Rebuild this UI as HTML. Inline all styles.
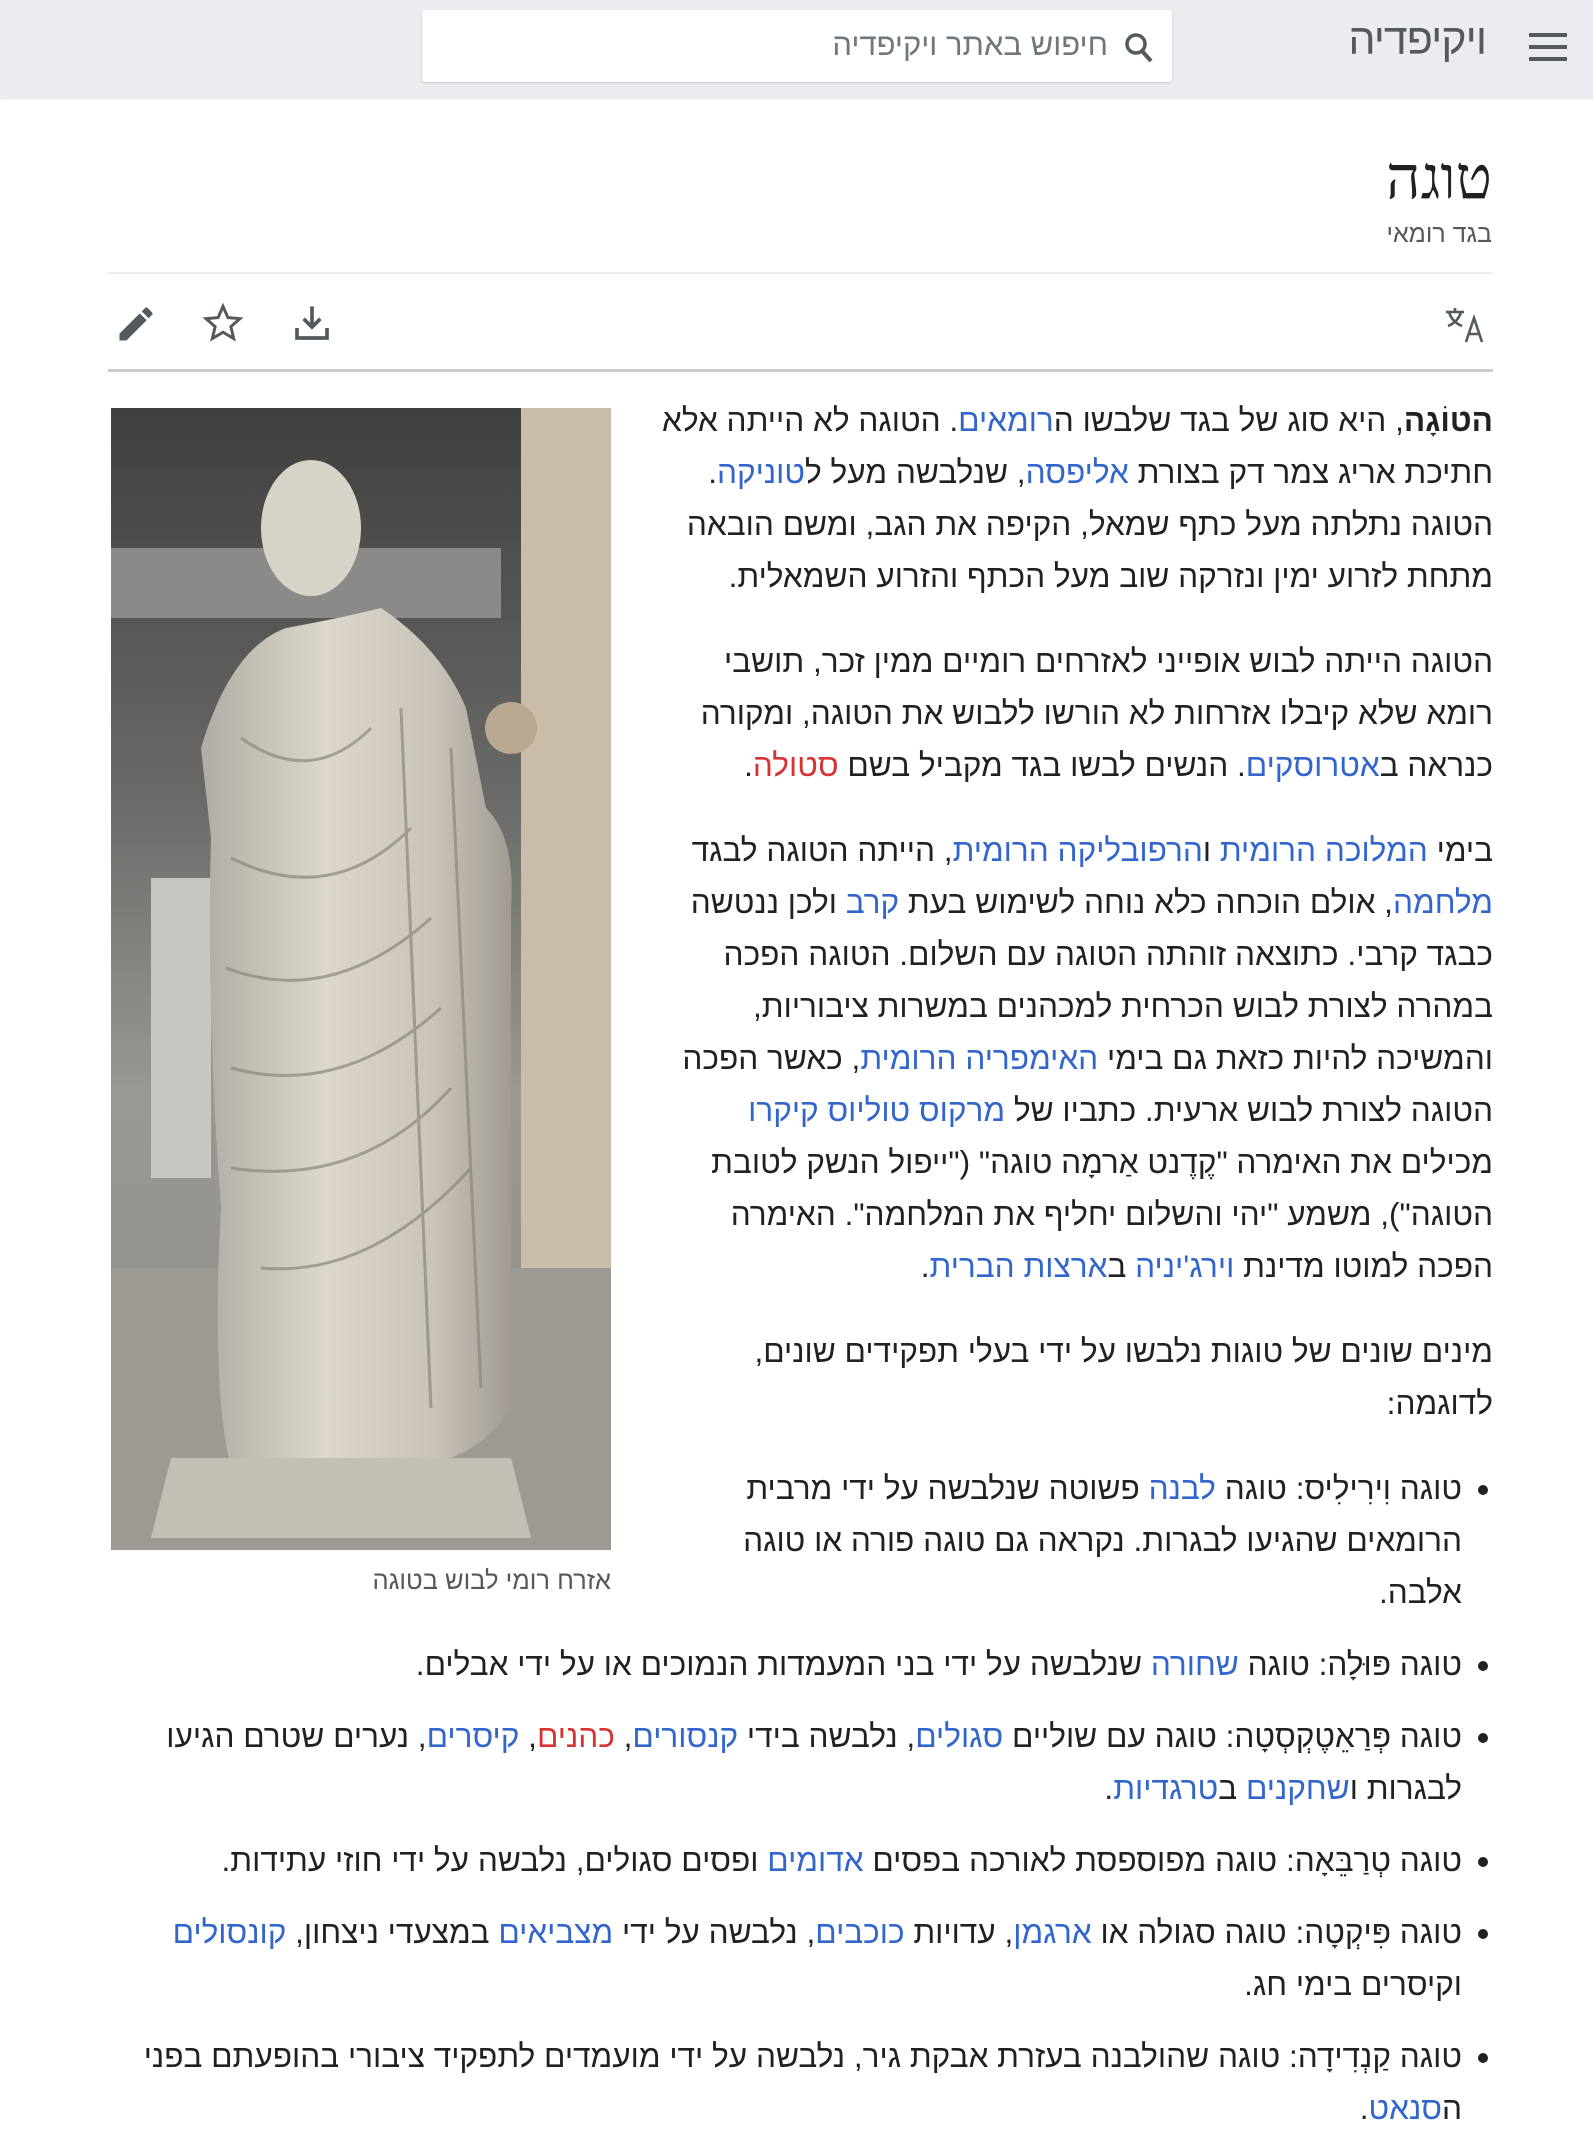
<!DOCTYPE html>
<html lang="he" dir="rtl"><head><meta charset="utf-8">
<style>
html,body{margin:0;padding:0;background:#fff;}
body{width:1593px;height:2137px;overflow:hidden;position:relative;font-family:"Liberation Sans","DejaVu Sans",sans-serif;color:#202122;}
.hdr{position:absolute;left:0;top:0;width:1593px;height:98px;background:#eaecf0;box-shadow:0 1px 2px rgba(0,0,0,.12);}
.ham{position:absolute;left:1529px;width:38px;height:4px;background:#54595d;}
.logo{position:absolute;right:107px;top:16px;font-size:43px;color:#54595d;letter-spacing:-1px;}
.search{position:absolute;left:422px;top:10px;width:750px;height:72px;background:#fff;border-radius:3px;box-shadow:0 1px 2px rgba(0,0,0,.15);}
.search span{position:absolute;right:64px;top:17px;font-size:31px;color:#72777d;}
h1{position:absolute;right:101px;top:143px;margin:0;font-weight:normal;font-size:60px;line-height:70px;font-family:"Liberation Serif","DejaVu Serif",serif;}
.sub{position:absolute;right:101px;top:220px;font-size:25px;color:#54595d;}
.l1{position:absolute;left:108px;width:1385px;top:272px;height:2px;background:#eaecf0;}
.l2{position:absolute;left:108px;width:1385px;top:369px;height:3px;background:#c8ccd1;}
.content{position:absolute;left:108px;top:394px;width:1385px;font-size:31.6px;line-height:52px;}
.fig{float:left;width:500px;margin:14px 50px 10px 3px;}
.fig svg{display:block;}
.cap{font-size:25.5px;color:#54595d;line-height:30px;margin-top:16px;text-align:right;}
p{margin:0 0 33px 0;}
a{color:#3366cc;text-decoration:none;}
a.new{color:#d73333;}
ul{margin:0;padding:0 31px 0 0;}
li{margin:0 0 20px 0;}
</style></head><body>
<div class="hdr">
  <div class="ham" style="top:33px"></div><div class="ham" style="top:45px"></div><div class="ham" style="top:57px"></div>
  <div class="logo">ויקיפדיה</div>
  <div class="search">
    <svg style="position:absolute;right:18px;top:22px" width="30" height="32" viewBox="0 0 30 32"><circle cx="12" cy="12" r="9" fill="none" stroke="#54595d" stroke-width="3.5"/><path d="M18 19 L27 29" stroke="#54595d" stroke-width="4"/></svg>
    <span>חיפוש באתר ויקיפדיה</span>
  </div>
</div>
<h1>טוגה</h1>
<div class="sub">בגד רומאי</div>
<div class="l1"></div>
<svg style="position:absolute;left:1444px;top:306px" width="42" height="38" viewBox="0 0 42 38" fill="none" stroke="#54595d" stroke-width="2.6"><path d="M2 6h18M11 2v4M5 6q3 10 13 14M17 6q-3 10-13 14"/><path d="M22 36l8-24 8 24M25 28h10"/></svg>
<svg style="position:absolute;left:114px;top:302px" width="44" height="44" viewBox="0 0 24 24"><path d="M3 17.25V21h3.75L17.81 9.94l-3.75-3.75L3 17.25zM20.71 7.04a1 1 0 000-1.41l-2.34-2.34a1 1 0 00-1.41 0l-1.83 1.830 3.75 3.75 1.83-1.83z" fill="#54595d"/></svg>
<svg style="position:absolute;left:202px;top:302px" width="42" height="42" viewBox="0 0 24 24"><path d="M12 2.5l2.8 6.4 6.9.6-5.2 4.6 1.6 6.8L12 17.3l-6.1 3.6 1.6-6.8-5.2-4.6 6.9-.6z" fill="none" stroke="#54595d" stroke-width="1.7"/></svg>
<svg style="position:absolute;left:292px;top:302px" width="40" height="42" viewBox="0 0 24 24"><path d="M12 2v12M7 9.5l5 5 5-5" fill="none" stroke="#54595d" stroke-width="2.2"/><path d="M3 15v6h18v-6" fill="none" stroke="#54595d" stroke-width="2.2"/></svg>
<div class="l2"></div>
<div class="content">
<div class="fig">
<svg width="500" height="1142" viewBox="0 0 500 1142">
<defs>
<linearGradient id="bg" x1="0" y1="0" x2="0" y2="1"><stop offset="0" stop-color="#3e403e"/><stop offset=".35" stop-color="#6b6c69"/><stop offset=".6" stop-color="#9a9894"/><stop offset="1" stop-color="#8e8c88"/></linearGradient>
<linearGradient id="st" x1="0" y1="0" x2="1" y2="0"><stop offset="0" stop-color="#b0aca3"/><stop offset=".4" stop-color="#dcd7cc"/><stop offset=".75" stop-color="#c8c3b9"/><stop offset="1" stop-color="#a09b92"/></linearGradient>
</defs>
<rect width="500" height="1142" fill="url(#bg)"/>
<rect x="410" y="0" width="90" height="1142" fill="#c9bca8"/>
<rect x="0" y="140" width="390" height="70" fill="#8a8b88"/>
<rect x="40" y="470" width="60" height="300" fill="#c8c6c1"/>
<rect x="0" y="860" width="500" height="282" fill="#9d9a94"/>
<ellipse cx="200" cy="120" rx="50" ry="68" fill="#d8d3c9"/>
<path d="M90 340 Q120 240 175 220 Q230 210 270 200 Q330 240 355 300 L375 400 Q405 430 400 500 L400 1000 Q370 1050 300 1060 L120 1060 Q100 980 110 800 Q95 600 100 430 Z" fill="url(#st)"/>
<circle cx="400" cy="320" r="26" fill="#b8a88f"/>
<path d="M60 1050 L400 1050 L420 1130 L40 1130 Z" fill="#c4bfb5"/>
<g stroke="#8c877d" stroke-width="3" fill="none" opacity=".7">
<path d="M130 330 Q200 380 260 320"/><path d="M120 450 Q220 500 300 420"/><path d="M115 560 Q220 600 320 510"/><path d="M120 660 Q230 690 330 600"/><path d="M120 760 Q250 780 340 680"/><path d="M150 860 Q260 870 360 760"/><path d="M290 300 L320 1000"/><path d="M340 340 L370 980"/>
</g>
</svg>
<div class="cap">אזרח רומי לבוש בטוגה</div>
</div>
<p><b>הטוֹגָה</b>, היא סוג של בגד שלבשו ה<a>רומאים</a>. הטוגה לא הייתה אלא<br>חתיכת אריג צמר דק בצורת <a>אליפסה</a>, שנלבשה מעל ל<a>טוניקה</a>.<br>הטוגה נתלתה מעל כתף שמאל, הקיפה את הגב, ומשם הובאה<br>מתחת לזרוע ימין ונזרקה שוב מעל הכתף והזרוע השמאלית.</p>
<p>הטוגה הייתה לבוש אופייני לאזרחים רומיים ממין זכר, תושבי<br>רומא שלא קיבלו אזרחות לא הורשו ללבוש את הטוגה, ומקורה<br>כנראה ב<a>אטרוסקים</a>. הנשים לבשו בגד מקביל בשם <a class="new">סטולה</a>.</p>
<p>בימי <a>המלוכה הרומית</a> ו<a>הרפובליקה הרומית</a>, הייתה הטוגה לבגד<br><a>מלחמה</a>, אולם הוכחה כלא נוחה לשימוש בעת <a>קרב</a> ולכן ננטשה<br>כבגד קרבי. כתוצאה זוהתה הטוגה עם השלום. הטוגה הפכה<br>במהרה לצורת לבוש הכרחית למכהנים במשרות ציבוריות,<br>והמשיכה להיות כזאת גם בימי <a>האימפריה הרומית</a>, כאשר הפכה<br>הטוגה לצורת לבוש ארעית. כתביו של <a>מרקוס טוליוס קיקרו</a><br>מכילים את האימרה "קֶדֶנט אַרמָה טוגה" ("ייפול הנשק לטובת<br>הטוגה"), משמע "יהי והשלום יחליף את המלחמה". האימרה<br>הפכה למוטו מדינת <a>וירג'יניה</a> ב<a>ארצות הברית</a>.</p>
<p>מינים שונים של טוגות נלבשו על ידי בעלי תפקידים שונים,<br>לדוגמה:</p>
<ul>
<li>טוגה וִירִילִיס: טוגה <a>לבנה</a> פשוטה שנלבשה על ידי מרבית<br>הרומאים שהגיעו לבגרות. נקראה גם טוגה פורה או טוגה<br>אלבה.</li>
<li>טוגה פּוּלָה: טוגה <a>שחורה</a> שנלבשה על ידי בני המעמדות הנמוכים או על ידי אבלים.</li>
<li>טוגה פְּרַאֵטֶקְסְטָה: טוגה עם שוליים <a>סגולים</a>, נלבשה בידי <a>קנסורים</a>, <a class="new">כהנים</a>, <a>קיסרים</a>, נערים שטרם הגיעו<br>לבגרות ו<a>שחקנים</a> ב<a>טרגדיות</a>.</li>
<li>טוגה טְרַבֵּאָה: טוגה מפוספסת לאורכה בפסים <a>אדומים</a> ופסים סגולים, נלבשה על ידי חוזי עתידות.</li>
<li>טוגה פִּיקְטָה: טוגה סגולה או <a>ארגמן</a>, עדויות <a>כוכבים</a>, נלבשה על ידי <a>מצביאים</a> במצעדי ניצחון, <a>קונסולים</a><br>וקיסרים בימי חג.</li>
<li>טוגה קַנְדִידָה: טוגה שהולבנה בעזרת אבקת גיר, נלבשה על ידי מועמדים לתפקיד ציבורי בהופעתם בפני<br>ה<a>סנאט</a>.</li>
</ul>
</div>
</body></html>
